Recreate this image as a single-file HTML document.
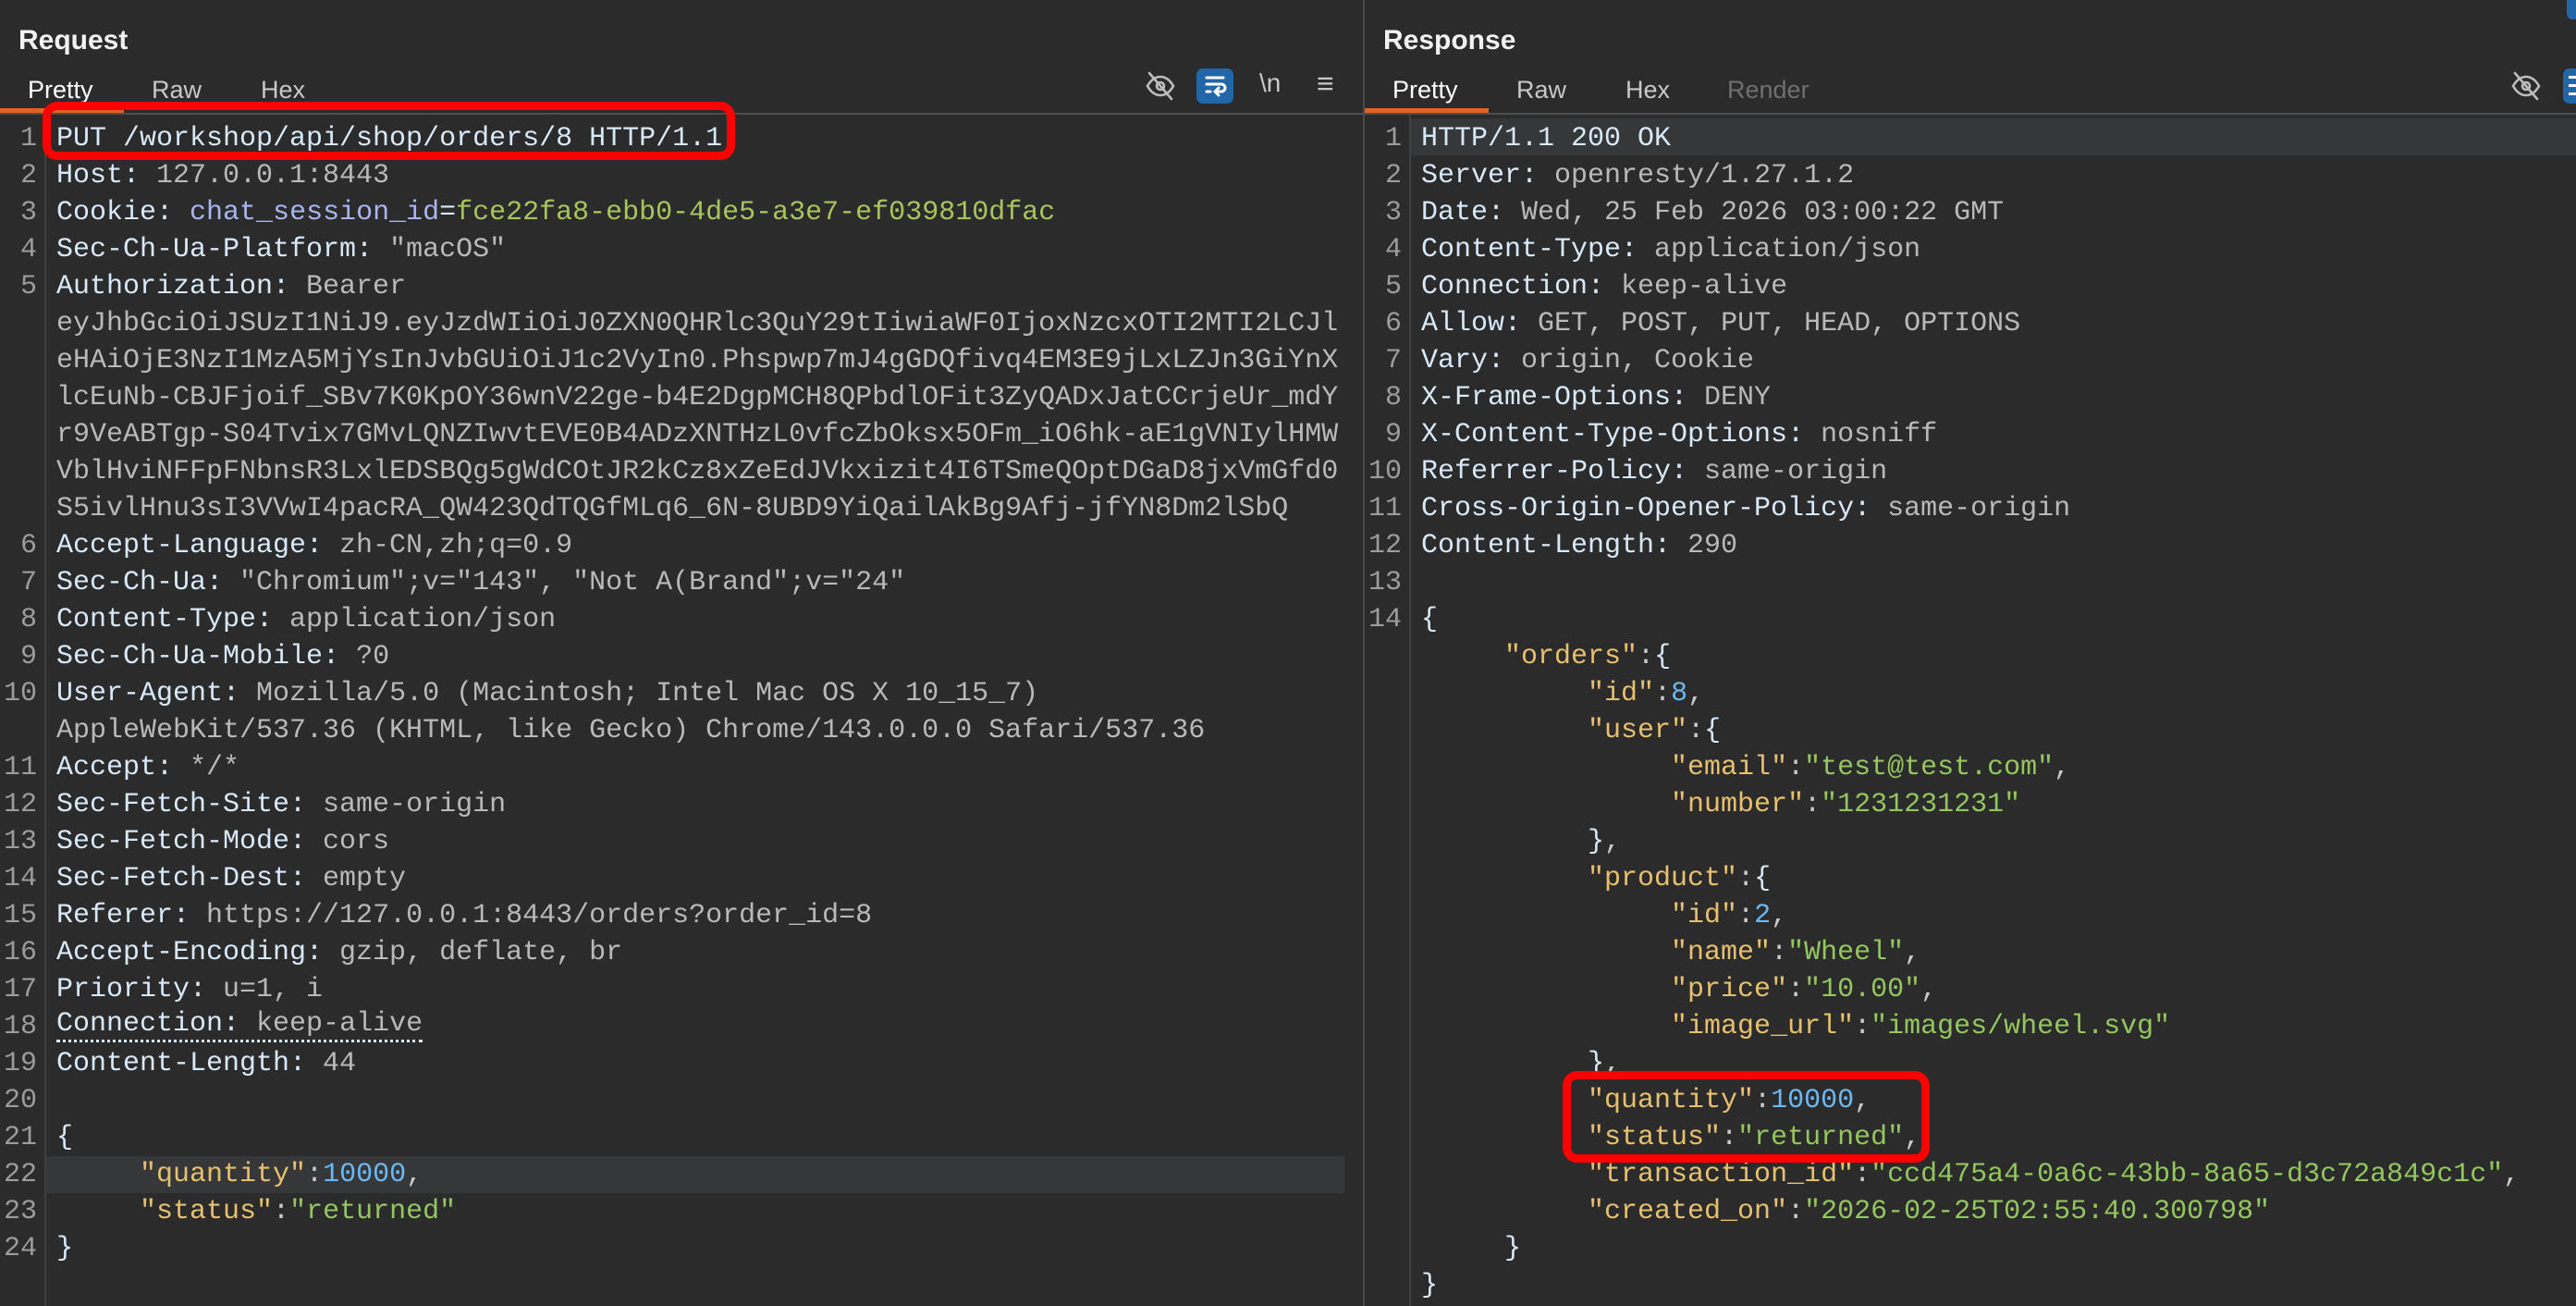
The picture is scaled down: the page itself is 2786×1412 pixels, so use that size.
<!DOCTYPE html>
<html><head><meta charset="utf-8">
<style>
*{margin:0;padding:0;box-sizing:border-box}
body{width:2786px;height:1412px;background:#2b2b2b;overflow:hidden;position:relative;font-family:"Liberation Mono",monospace;}
.pane{position:absolute;top:0;height:1412px;overflow:hidden}
.title{position:absolute;top:27px;font:bold 30px "Liberation Sans",sans-serif;color:#f2f2f2}
.tab{position:absolute;top:82px;font:27px "Liberation Sans",sans-serif;color:#c8c8c8}
.hline{position:absolute;top:122px;height:2px;background:#4e4e4e}
.orange{position:absolute;top:117px;height:5px;background:#e0622a}
.gut{position:absolute;top:124px;bottom:0;width:2px;background:#3f3f3f}
.code{position:absolute;top:130px;left:0;right:0}
.row{height:40px;line-height:40px;position:relative;white-space:pre;font-size:30px}
.ln{position:absolute;left:0;width:40px;text-align:right;color:#9c9c9c}
.tx{position:absolute;left:61px;color:#b9b9b9}
.k{color:#d8e8f7}.v{color:#b9b9b9}.cn{color:#a9b5ec}.cv{color:#a9c45c}
.jk{color:#e6c06e}.js{color:#93c65e}.jn{color:#6bb8f2}.p{color:#c9c9c9}.b{color:#d8e8f7}
.red{position:absolute;border:9px solid #ff0000;border-radius:16px}
</style></head><body>

<div class="pane" style="left:0;width:1474px">
  <div class="title" style="left:20px">Request</div>
  <div class="tab" style="left:30px;color:#fff">Pretty</div>
  <div class="tab" style="left:164px">Raw</div>
  <div class="tab" style="left:282px">Hex</div>
  <svg style="position:absolute;left:1238px;top:76px" width="34" height="34" viewBox="0 0 34 34" fill="none" stroke="#bdbdbd" stroke-width="2.6" stroke-linecap="round"><path d="M3 17c4-7 9-10 14-10s10 3 14 10c-4 7-9 10-14 10S7 24 3 17z"/><circle cx="17" cy="17" r="4"/><path d="M5 3l24 28"/></svg>
  <div style="position:absolute;left:1294px;top:74px;width:40px;height:38px;border-radius:7px;background:#2266aa"></div>
  <svg style="position:absolute;left:1300px;top:80px" width="28" height="26" viewBox="0 0 28 26" fill="none" stroke="#fff" stroke-width="3" stroke-linecap="round"><path d="M5 4h18M5 11h16a4 4 0 0 1 0 8h-6M18 15l-4 4 4 4M5 19h4"/></svg>
  <div style="position:absolute;left:1362px;top:74px;font:28px 'Liberation Sans',sans-serif;color:#c8c8c8">\n</div>
  <div style="position:absolute;left:1424px;top:72px;font:32px 'Liberation Sans',sans-serif;color:#c8c8c8">≡</div>
  <div class="hline" style="left:0;width:1474px"></div>
  <div class="orange" style="left:0;width:134px"></div>
  <div class="gut" style="left:48px"></div>
  <div style="position:absolute;left:50px;top:1250px;width:1404px;height:40px;background:#363739"></div>
  <div class="code">
    <div class="row"><span class="ln">1</span><span class="tx"><span class="k">PUT /workshop/api/shop/orders/8 HTTP/1.1</span></span></div>
    <div class="row"><span class="ln">2</span><span class="tx"><span class="k">Host:</span> 127.0.0.1:8443</span></div>
    <div class="row"><span class="ln">3</span><span class="tx"><span class="k">Cookie:</span> <span class="cn">chat_session_id</span><span class="k">=</span><span class="cv">fce22fa8-ebb0-4de5-a3e7-ef039810dfac</span></span></div>
    <div class="row"><span class="ln">4</span><span class="tx"><span class="k">Sec-Ch-Ua-Platform:</span> "macOS"</span></div>
    <div class="row"><span class="ln">5</span><span class="tx"><span class="k">Authorization:</span> Bearer</span></div>
    <div class="row"><span class="tx">eyJhbGciOiJSUzI1NiJ9.eyJzdWIiOiJ0ZXN0QHRlc3QuY29tIiwiaWF0IjoxNzcxOTI2MTI2LCJl</span></div>
    <div class="row"><span class="tx">eHAiOjE3NzI1MzA5MjYsInJvbGUiOiJ1c2VyIn0.Phspwp7mJ4gGDQfivq4EM3E9jLxLZJn3GiYnX</span></div>
    <div class="row"><span class="tx">lcEuNb-CBJFjoif_SBv7K0KpOY36wnV22ge-b4E2DgpMCH8QPbdlOFit3ZyQADxJatCCrjeUr_mdY</span></div>
    <div class="row"><span class="tx">r9VeABTgp-S04Tvix7GMvLQNZIwvtEVE0B4ADzXNTHzL0vfcZbOksx5OFm_iO6hk-aE1gVNIylHMW</span></div>
    <div class="row"><span class="tx">VblHviNFFpFNbnsR3LxlEDSBQg5gWdCOtJR2kCz8xZeEdJVkxizit4I6TSmeQOptDGaD8jxVmGfd0</span></div>
    <div class="row"><span class="tx">S5ivlHnu3sI3VVwI4pacRA_QW423QdTQGfMLq6_6N-8UBD9YiQailAkBg9Afj-jfYN8Dm2lSbQ</span></div>
    <div class="row"><span class="ln">6</span><span class="tx"><span class="k">Accept-Language:</span> zh-CN,zh;q=0.9</span></div>
    <div class="row"><span class="ln">7</span><span class="tx"><span class="k">Sec-Ch-Ua:</span> "Chromium";v="143", "Not A(Brand";v="24"</span></div>
    <div class="row"><span class="ln">8</span><span class="tx"><span class="k">Content-Type:</span> application/json</span></div>
    <div class="row"><span class="ln">9</span><span class="tx"><span class="k">Sec-Ch-Ua-Mobile:</span> ?0</span></div>
    <div class="row"><span class="ln">10</span><span class="tx"><span class="k">User-Agent:</span> Mozilla/5.0 (Macintosh; Intel Mac OS X 10_15_7)</span></div>
    <div class="row"><span class="tx">AppleWebKit/537.36 (KHTML, like Gecko) Chrome/143.0.0.0 Safari/537.36</span></div>
    <div class="row"><span class="ln">11</span><span class="tx"><span class="k">Accept:</span> */*</span></div>
    <div class="row"><span class="ln">12</span><span class="tx"><span class="k">Sec-Fetch-Site:</span> same-origin</span></div>
    <div class="row"><span class="ln">13</span><span class="tx"><span class="k">Sec-Fetch-Mode:</span> cors</span></div>
    <div class="row"><span class="ln">14</span><span class="tx"><span class="k">Sec-Fetch-Dest:</span> empty</span></div>
    <div class="row"><span class="ln">15</span><span class="tx"><span class="k">Referer:</span> https://127.0.0.1:8443/orders?order_id=8</span></div>
    <div class="row"><span class="ln">16</span><span class="tx"><span class="k">Accept-Encoding:</span> gzip, deflate, br</span></div>
    <div class="row"><span class="ln">17</span><span class="tx"><span class="k">Priority:</span> u=1, i</span></div>
    <div class="row"><span class="ln">18</span><span class="tx" style="border-bottom:3px dotted #d8e8f7;line-height:34px"><span class="k">Connection:</span> keep-alive</span></div>
    <div class="row"><span class="ln">19</span><span class="tx"><span class="k">Content-Length:</span> 44</span></div>
    <div class="row"><span class="ln">20</span><span class="tx"></span></div>
    <div class="row"><span class="ln">21</span><span class="tx"><span class="b">{</span></span></div>
    <div class="row"><span class="ln">22</span><span class="tx">     <span class="jk">"quantity"</span><span class="p">:</span><span class="jn">10000</span><span class="p">,</span></span></div>
    <div class="row"><span class="ln">23</span><span class="tx">     <span class="jk">"status"</span><span class="p">:</span><span class="js">"returned"</span></span></div>
    <div class="row"><span class="ln">24</span><span class="tx"><span class="b">}</span></span></div>
  </div>
  <div class="red" style="left:46px;top:110px;width:749px;height:63px"></div>
</div>

<div style="position:absolute;left:1474px;top:0;width:2px;height:1412px;background:#4a4a4a"></div>

<div class="pane" style="left:1476px;width:1310px">
  <div class="title" style="left:20px">Response</div>
  <div class="tab" style="left:30px;color:#fff">Pretty</div>
  <div class="tab" style="left:164px">Raw</div>
  <div class="tab" style="left:282px">Hex</div>
  <div class="tab" style="left:392px;color:#6f6f6f">Render</div>
  <svg style="position:absolute;left:1239px;top:76px" width="34" height="34" viewBox="0 0 34 34" fill="none" stroke="#bdbdbd" stroke-width="2.6" stroke-linecap="round"><path d="M3 17c4-7 9-10 14-10s10 3 14 10c-4 7-9 10-14 10S7 24 3 17z"/><circle cx="17" cy="17" r="4"/><path d="M5 3l24 28"/></svg>
  <div style="position:absolute;left:1296px;top:74px;width:40px;height:38px;border-radius:7px;background:#2266aa"></div>
  <div style="position:absolute;left:1302px;top:82px;width:10px;height:3px;background:#fff"></div>
  <div style="position:absolute;left:1302px;top:91px;width:10px;height:3px;background:#fff"></div>
  <div style="position:absolute;left:1302px;top:100px;width:10px;height:3px;background:#fff"></div>
  <div style="position:absolute;left:1300px;top:0;width:20px;height:21px;border-radius:0 0 0 6px;background:#2266aa"></div>
  <div class="hline" style="left:0;width:1310px"></div>
  <div class="orange" style="left:0;width:134px"></div>
  <div class="gut" style="left:48px"></div>
  <div style="position:absolute;left:50px;top:128px;width:1260px;height:40px;background:#363739"></div>
  <div class="code">
    <div class="row"><span class="ln">1</span><span class="tx"><span class="k">HTTP/1.1 200 OK</span></span></div>
    <div class="row"><span class="ln">2</span><span class="tx"><span class="k">Server:</span> openresty/1.27.1.2</span></div>
    <div class="row"><span class="ln">3</span><span class="tx"><span class="k">Date:</span> Wed, 25 Feb 2026 03:00:22 GMT</span></div>
    <div class="row"><span class="ln">4</span><span class="tx"><span class="k">Content-Type:</span> application/json</span></div>
    <div class="row"><span class="ln">5</span><span class="tx"><span class="k">Connection:</span> keep-alive</span></div>
    <div class="row"><span class="ln">6</span><span class="tx"><span class="k">Allow:</span> GET, POST, PUT, HEAD, OPTIONS</span></div>
    <div class="row"><span class="ln">7</span><span class="tx"><span class="k">Vary:</span> origin, Cookie</span></div>
    <div class="row"><span class="ln">8</span><span class="tx"><span class="k">X-Frame-Options:</span> DENY</span></div>
    <div class="row"><span class="ln">9</span><span class="tx"><span class="k">X-Content-Type-Options:</span> nosniff</span></div>
    <div class="row"><span class="ln">10</span><span class="tx"><span class="k">Referrer-Policy:</span> same-origin</span></div>
    <div class="row"><span class="ln">11</span><span class="tx"><span class="k">Cross-Origin-Opener-Policy:</span> same-origin</span></div>
    <div class="row"><span class="ln">12</span><span class="tx"><span class="k">Content-Length:</span> 290</span></div>
    <div class="row"><span class="ln">13</span><span class="tx"></span></div>
    <div class="row"><span class="ln">14</span><span class="tx"><span class="b">{</span></span></div>
    <div class="row"><span class="tx">     <span class="jk">"orders"</span><span class="p">:</span><span class="b">{</span></span></div>
    <div class="row"><span class="tx">          <span class="jk">"id"</span><span class="p">:</span><span class="jn">8</span><span class="p">,</span></span></div>
    <div class="row"><span class="tx">          <span class="jk">"user"</span><span class="p">:</span><span class="b">{</span></span></div>
    <div class="row"><span class="tx">               <span class="jk">"email"</span><span class="p">:</span><span class="js">"test@test.com"</span><span class="p">,</span></span></div>
    <div class="row"><span class="tx">               <span class="jk">"number"</span><span class="p">:</span><span class="js">"1231231231"</span></span></div>
    <div class="row"><span class="tx">          <span class="b">}</span><span class="p">,</span></span></div>
    <div class="row"><span class="tx">          <span class="jk">"product"</span><span class="p">:</span><span class="b">{</span></span></div>
    <div class="row"><span class="tx">               <span class="jk">"id"</span><span class="p">:</span><span class="jn">2</span><span class="p">,</span></span></div>
    <div class="row"><span class="tx">               <span class="jk">"name"</span><span class="p">:</span><span class="js">"Wheel"</span><span class="p">,</span></span></div>
    <div class="row"><span class="tx">               <span class="jk">"price"</span><span class="p">:</span><span class="js">"10.00"</span><span class="p">,</span></span></div>
    <div class="row"><span class="tx">               <span class="jk">"image_url"</span><span class="p">:</span><span class="js">"images/wheel.svg"</span></span></div>
    <div class="row"><span class="tx">          <span class="b">}</span><span class="p">,</span></span></div>
    <div class="row"><span class="tx">          <span class="jk">"quantity"</span><span class="p">:</span><span class="jn">10000</span><span class="p">,</span></span></div>
    <div class="row"><span class="tx">          <span class="jk">"status"</span><span class="p">:</span><span class="js">"returned"</span><span class="p">,</span></span></div>
    <div class="row"><span class="tx">          <span class="jk">"transaction_id"</span><span class="p">:</span><span class="js">"ccd475a4-0a6c-43bb-8a65-d3c72a849c1c"</span><span class="p">,</span></span></div>
    <div class="row"><span class="tx">          <span class="jk">"created_on"</span><span class="p">:</span><span class="js">"2026-02-25T02:55:40.300798"</span></span></div>
    <div class="row"><span class="tx">     <span class="b">}</span></span></div>
    <div class="row"><span class="tx"><span class="b">}</span></span></div>
  </div>
  <div class="red" style="left:214px;top:1158px;width:397px;height:99px"></div>
</div>
</body></html>
